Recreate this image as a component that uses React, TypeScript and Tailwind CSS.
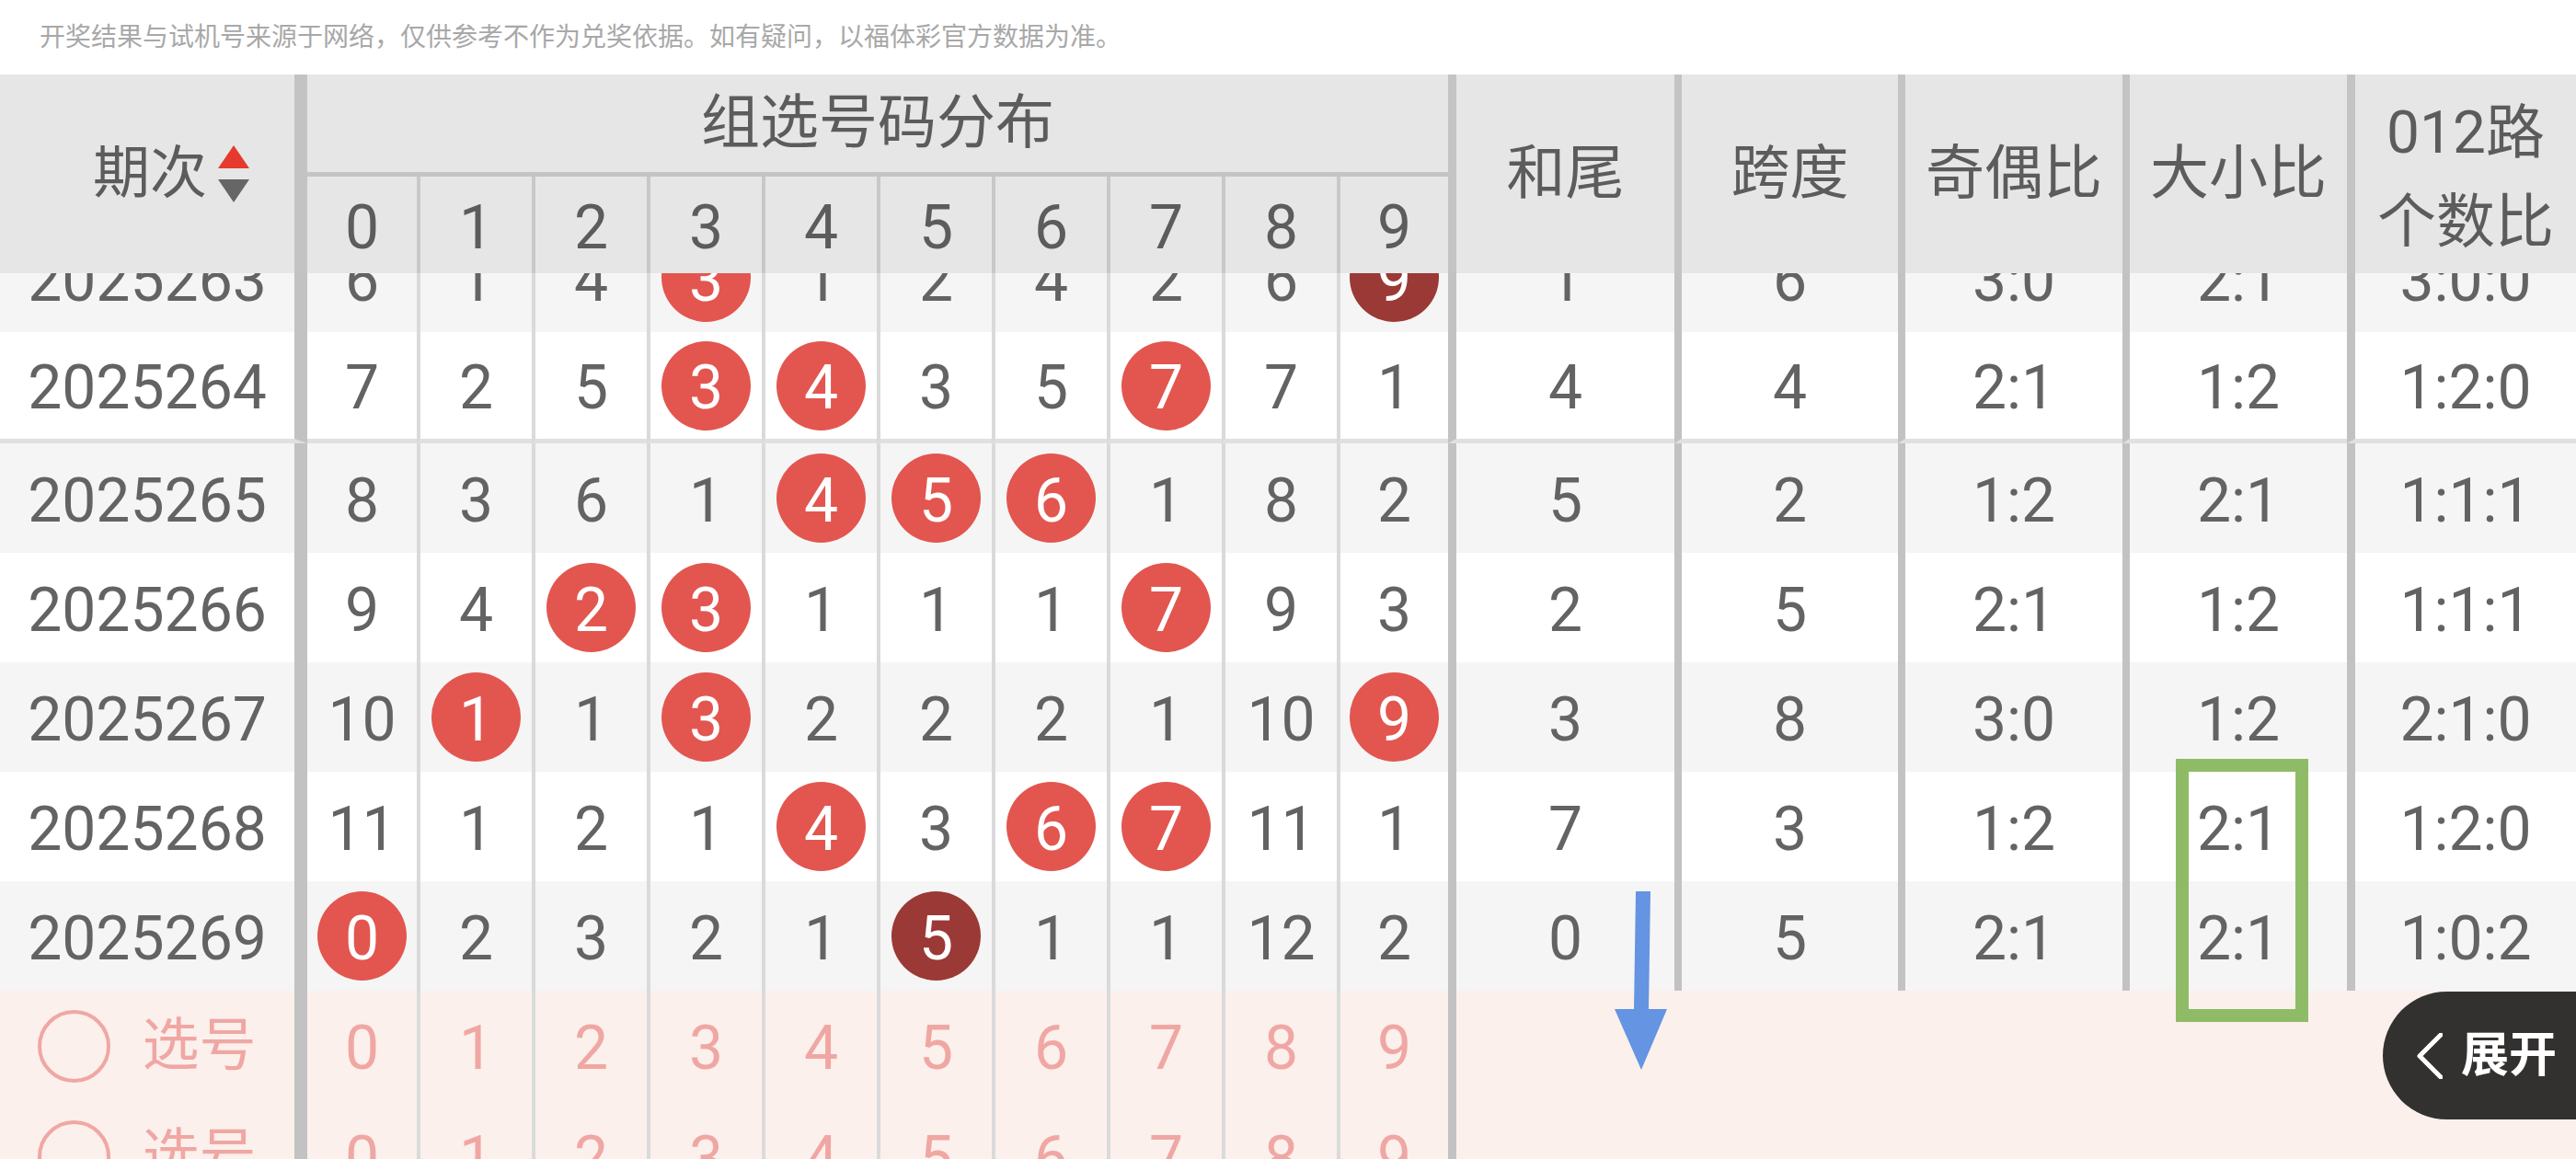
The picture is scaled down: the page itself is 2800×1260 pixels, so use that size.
import React from 'react';

type Row = {
    id: string;
    d: string[];
    hw: string;
    kd: string;
    jo: string;
    dx: string;
    l012: string;
    line?: boolean;
};

// 'r3' = red ball, 'k9' = dark ball, plain = missed count
const rows: Row[] = [
    { id: '2025263', d: ['6', '1', '4', 'r3', '1', '2', '4', '2', '6', 'k9'], hw: '1', kd: '6', jo: '3:0', dx: '2:1', l012: '3:0:0' },
    { id: '2025264', d: ['7', '2', '5', 'r3', 'r4', '3', '5', 'r7', '7', '1'], hw: '4', kd: '4', jo: '2:1', dx: '1:2', l012: '1:2:0', line: true },
    { id: '2025265', d: ['8', '3', '6', '1', 'r4', 'r5', 'r6', '1', '8', '2'], hw: '5', kd: '2', jo: '1:2', dx: '2:1', l012: '1:1:1' },
    { id: '2025266', d: ['9', '4', 'r2', 'r3', '1', '1', '1', 'r7', '9', '3'], hw: '2', kd: '5', jo: '2:1', dx: '1:2', l012: '1:1:1' },
    { id: '2025267', d: ['10', 'r1', '1', 'r3', '2', '2', '2', '1', '10', 'r9'], hw: '3', kd: '8', jo: '3:0', dx: '1:2', l012: '2:1:0' },
    { id: '2025268', d: ['11', '1', '2', '1', 'r4', '3', 'r6', 'r7', '11', '1'], hw: '7', kd: '3', jo: '1:2', dx: '2:1', l012: '1:2:0' },
    { id: '2025269', d: ['r0', '2', '3', '2', '1', 'k5', '1', '1', '12', '2'], hw: '0', kd: '5', jo: '2:1', dx: '2:1', l012: '1:0:2' },
];

const digitW = (i: number) =>
    i === 0 ? 'w-[119px]' : i === 9 ? 'w-[121px] border-l-4' : 'w-[125px] border-l-4';

const rightW = [
    'w-[246px] border-l-[9px]',
    'w-[243px] border-l-8',
    'w-[244px] border-l-8',
    'w-[244px] border-l-8',
    'flex-1 border-l-[9px]',
];

function Ball({ v }: { v: string }) {
    if (v[0] === 'r' || v[0] === 'k') {
        return (
            <div
                className={`flex h-[97px] w-[97px] items-center justify-center rounded-full text-white ${
                    v[0] === 'r' ? 'bg-[#e2564f]' : 'bg-[#9a3935]'
                }`}
            >
                <span className="pt-[6px]">{v.slice(1)}</span>
            </div>
        );
    }
    return <span className="pt-[6px]">{v}</span>;
}

function SortArrows() {
    return (
        <svg width="34" height="62" viewBox="0 0 34 62" className="ml-[12px]">
            <polygon points="17,0 34,25 0,25" fill="#e53a2d" />
            <polygon points="0,37 34,37 17,62" fill="#666666" />
        </svg>
    );
}

function Header() {
    return (
        <div className="flex h-[216px] bg-[#e6e6e6] text-[#5c5c5c]">
            {/* 期次 */}
            <div className="flex w-[334px] items-center justify-center border-r-[14px] border-[#c3c3c3] pl-[52px]">
                <span className="text-[62px] leading-none">期次</span>
                <SortArrows />
            </div>

            {/* 组选号码分布 */}
            <div className="flex w-[1240px] flex-col">
                <div className="flex h-[111px] items-center justify-center border-b-[5px] border-[#c4c4c4] text-[64px] leading-none">
                    组选号码分布
                </div>
                <div className="flex flex-1">
                    {Array.from({ length: 10 }, (_, i) => (
                        <div
                            key={i}
                            className={`${digitW(i)} flex items-center justify-center border-[#c8c8c8] pt-[6px] text-[66px] leading-none`}
                        >
                            {i}
                        </div>
                    ))}
                </div>
            </div>

            {['和尾', '跨度', '奇偶比', '大小比'].map((t, i) => (
                <div
                    key={t}
                    className={`${rightW[i]} flex items-center justify-center border-[#c4c4c4] text-[64px] leading-none`}
                >
                    {t}
                </div>
            ))}
            <div className={`${rightW[4]} flex flex-col items-center justify-center border-[#c4c4c4] pt-[8px] text-[64px] leading-[97px]`}>
                <span>012路</span>
                <span>个数比</span>
            </div>
        </div>
    );
}

function DataRow({ row, idx }: { row: Row; idx: number }) {
    const bg = idx % 2 === 0 ? 'bg-[#f5f5f5]' : 'bg-white';
    const line = row.line ? 'border-b-[5px] border-b-[#e0e0e0]' : '';
    return (
        <div className={`flex ${row.line ? 'h-[121px]' : 'h-[119px]'} ${bg}`}>
            <div className={`flex w-[334px] items-center justify-center border-r-[14px] border-r-[#c2c2c2] pt-[6px] ${line}`}>
                {row.id}
            </div>
            {row.d.map((v, i) => (
                <div
                    key={i}
                    className={`${digitW(i)} flex items-center justify-center border-l-[#dadada] ${line}`}
                >
                    <Ball v={v} />
                </div>
            ))}
            {[row.hw, row.kd, row.jo, row.dx, row.l012].map((v, i) => (
                <div
                    key={i}
                    className={`${rightW[i]} flex items-center justify-center border-l-[#c2c2c2] pt-[6px] ${line}`}
                >
                    {v}
                </div>
            ))}
        </div>
    );
}

function PickRows() {
    return (
        <div className="flex h-[240px] bg-[#fbf0eb] text-[#f0a7a4]">
            <div className="flex flex-col">
                {[0, 1].map((r) => (
                    <div key={r} className="flex h-[120px]">
                        <div className="flex w-[334px] items-center justify-center gap-[34px] border-r-[14px] border-[#c2c2c2]">
                            <div className="h-[79px] w-[79px] rounded-full border-[4px] border-[#f0a7a4]" />
                            <span className="text-[62px]">选号</span>
                        </div>
                        {Array.from({ length: 10 }, (_, i) => (
                            <div
                                key={i}
                                className={`${digitW(i)} flex items-center justify-center border-[#dadada] pt-[6px]`}
                            >
                                {i}
                            </div>
                        ))}
                    </div>
                ))}
            </div>
            <div className="flex-1 border-l-[9px] border-[#c2c2c2]" />
        </div>
    );
}

export default function App() {
    return (
        <div className="relative h-[1260px] w-[2800px] overflow-hidden bg-white font-[Roboto,'Noto_Sans_CJK_SC',sans-serif] text-[#636363]">
            {/* Disclaimer */}
            <div className="flex h-[81px] items-center pl-[43px] text-[28px] text-[#a8a8a8]">
                开奖结果与试机号来源于网络，仅供参考不作为兑奖依据。如有疑问，以福体彩官方数据为准。
            </div>

            <Header />

            {/* Body, scrolled so the first row sits under the header */}
            <div className="h-[963px] overflow-hidden text-[66px] leading-none">
                <div className="-mt-[55px]">
                    {rows.map((row, i) => (
                        <DataRow key={row.id} row={row} idx={i} />
                    ))}
                    <PickRows />
                </div>
            </div>

            {/* Annotation: blue arrow */}
            <svg
                width="70"
                height="210"
                viewBox="0 0 70 210"
                className="absolute left-[1750px] top-[960px]"
            >
                <polygon points="28,9 44,9 42,138 26,138" fill="#6494e2" />
                <polygon points="5,137 62,137 34,203" fill="#6494e2" />
            </svg>

            {/* Annotation: green box */}
            <div className="absolute left-[2365px] top-[825px] h-[286px] w-[144px] border-[14px] border-[#8fbb66]" />

            {/* 展开 */}
            <div className="absolute right-0 top-[1078px] flex h-[139px] w-[210px] items-center rounded-l-[70px] bg-[#33312f] pl-[37px] text-white">
                <svg width="28" height="50" viewBox="0 0 28 50">
                    <polyline
                        points="26,2 3,25 26,48"
                        fill="none"
                        stroke="#ffffff"
                        strokeWidth="5"
                        strokeLinecap="round"
                        strokeLinejoin="round"
                    />
                </svg>
                <span className="ml-[20px] text-[52px] font-bold leading-none">展开</span>
            </div>
        </div>
    );
}
